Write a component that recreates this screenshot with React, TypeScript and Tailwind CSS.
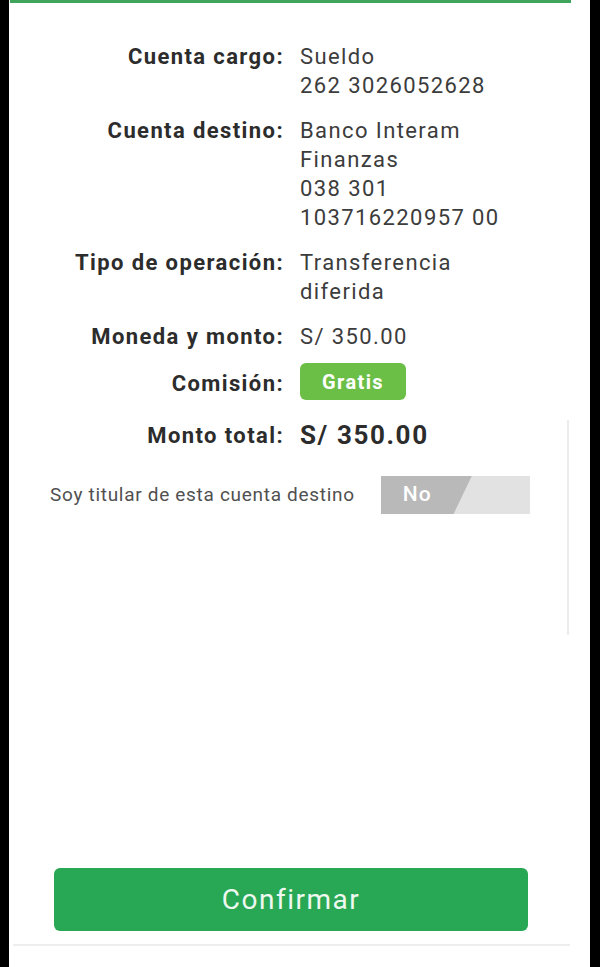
import React from 'react';

interface Row {
  label: string;
  lines: string[];
}

const rows: Row[] = [
  { label: 'Cuenta cargo:', lines: ['Sueldo', '262 3026052628'] },
  { label: 'Cuenta destino:', lines: ['Banco Interam', 'Finanzas', '038 301', '103716220957 00'] },
  { label: 'Tipo de operación:', lines: ['Transferencia', 'diferida'] },
  { label: 'Moneda y monto:', lines: ['S/ 350.00'] },
];

const Toggle: React.FC = () => (
  <div className="flex h-[38px] w-[149px] bg-[#e2e2e2]">
    <div className="flex h-full w-[91px] items-center bg-[#b9b9b9] pl-[22px] [clip-path:polygon(0_0,100%_0,80%_100%,0_100%)]">
      <span className="text-[21px] font-medium tracking-[1px] text-white">No</span>
    </div>
  </div>
);

export default function App() {
  return (
    <div
      className="flex h-[967px] w-[600px] bg-black pl-[9px] pr-[10px]"
      style={{ fontFamily: 'Roboto, "Noto Sans", sans-serif' }}
    >
      <div className="relative flex w-full flex-col bg-white">
        <div className="mr-[19px] ml-[1px] h-[3px] bg-[#3fa45c]" />

        <div className="grid grid-cols-[275px_1fr] gap-x-[16px] gap-y-[16px] pt-[39px]">
          {rows.map((row) => (
            <React.Fragment key={row.label}>
              <div className="text-right text-[22px] leading-[29px] font-bold tracking-[1.4px] text-[#2c2c2c]">
                {row.label}
              </div>
              <div className="text-[22px] leading-[29px] tracking-[1.4px] text-[#3c3c3c]">
                {row.lines.map((l) => (
                  <div key={l}>{l}</div>
                ))}
              </div>
            </React.Fragment>
          ))}

          <div className="flex items-center justify-end text-[22px] font-bold tracking-[1.4px] text-[#2c2c2c]">
            Comisión:
          </div>
          <div className="-mt-[4px]">
            <span className="inline-flex h-[37px] w-[106px] items-center justify-center rounded-[6px] bg-[#6cbf46] text-[20px] font-bold tracking-[1.4px] text-white">
              Gratis
            </span>
          </div>

          <div className="flex items-center justify-end text-[22px] font-bold tracking-[1.4px] text-[#2c2c2c]">
            Monto total:
          </div>
          <div className="text-[26px] leading-[38px] font-bold tracking-[1.6px] text-[#2c2c2c]">S/ 350.00</div>
        </div>

        <div className="mt-[22px] flex items-center gap-[26px] pl-[41px]">
          <span className="text-[19px] tracking-[0.7px] text-[#505050]">Soy titular de esta cuenta destino</span>
          <Toggle />
        </div>

        <div className="absolute top-[420px] left-[558px] h-[215px] w-[2px] bg-[#ececec]" />

        <div className="flex-1" />

        <div className="flex pl-[45px]">
          <button className="h-[63px] w-[474px] rounded-[6px] bg-[#28a854] text-[28px] tracking-[1.5px] text-[#eef8f0]">
            Confirmar
          </button>
        </div>
        <div className="mt-[13px] mr-[20px] ml-[4px] h-[2px] bg-[#eeeeee]" />
        <div className="h-[21px]" />
      </div>
    </div>
  );
}
